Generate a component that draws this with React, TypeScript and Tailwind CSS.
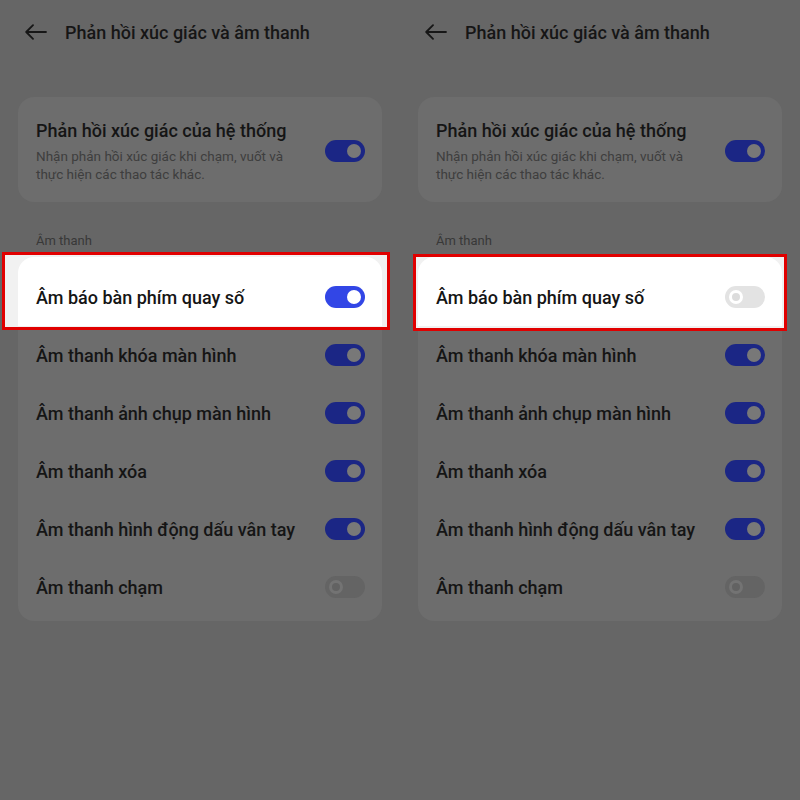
import React from 'react';

type Row = { label: string; on: boolean };

const rows: Row[] = [
  { label: 'Âm thanh khóa màn hình', on: true },
  { label: 'Âm thanh ảnh chụp màn hình', on: true },
  { label: 'Âm thanh xóa', on: true },
  { label: 'Âm thanh hình động dấu vân tay', on: true },
  { label: 'Âm thanh chạm', on: false },
];

function Toggle({ on, lit }: { on: boolean; lit?: boolean }) {
  if (on) {
    return (
      <div
        className={`flex h-[22px] w-[40px] shrink-0 items-center justify-end rounded-full pr-[4px] ${
          lit ? 'bg-[#3246e6]' : 'bg-[#1b2685]'
        }`}
      >
        <div className={`h-[14px] w-[14px] rounded-full ${lit ? 'bg-white' : 'bg-[#787878]'}`} />
      </div>
    );
  }
  return (
    <div
      className={`flex h-[22px] w-[40px] shrink-0 items-center rounded-full pl-[4px] ${
        lit ? 'bg-[#e3e3e3]' : 'bg-[#646464]'
      }`}
    >
      <div
        className={`h-[14px] w-[14px] rounded-full border-[3px] ${
          lit ? 'border-white bg-[#dcdcdc]' : 'border-[#737373] bg-[#626262]'
        }`}
      />
    </div>
  );
}

function ListRow({ row, lit }: { row: Row; lit?: boolean }) {
  return (
    <div className="flex h-[58px] items-center justify-between pl-[18px] pr-[17px]">
      <span className="text-[18px] font-medium text-[#151515]">{row.label}</span>
      <Toggle on={row.on} lit={lit} />
    </div>
  );
}

function Panel({ dialOn, left }: { dialOn: boolean; left: boolean }) {
  return (
    <div className="flex w-[400px] flex-col px-[18px]">
      {/* header */}
      <div className="flex h-[64px] items-center">
        <svg width="22" height="16" viewBox="0 0 22 16" className="ml-[7px] shrink-0" fill="none" stroke="#161616" strokeWidth="1.8" strokeLinecap="round" strokeLinejoin="round">
          <path d="M21 8H1.5M8 1.2L1.2 8 8 14.8" />
        </svg>
        <span className="ml-[18px] text-[18px] font-medium text-[#161616]">Phản hồi xúc giác và âm thanh</span>
      </div>

      {/* system haptics card */}
      <div className="mt-[33px] flex items-center justify-between rounded-[16px] bg-[#6d6d6d] pb-[19px] pl-[18px] pr-[17px] pt-[22px]">
        <div className="flex flex-col">
          <span className="text-[18px] font-medium leading-[24px] text-[#151515]">Phản hồi xúc giác của hệ thống</span>
          <span className="mt-[4px] text-[13.5px] leading-[18px] text-[#3e3e3e]">
            Nhận phản hồi xúc giác khi chạm, vuốt và
            <br />
            thực hiện các thao tác khác.
          </span>
        </div>
        <Toggle on />
      </div>

      <div className="mt-[30px] pl-[18px] text-[13px] leading-[18px] text-[#383838]">Âm thanh</div>

      {/* highlighted first row */}
      <div
        className={`relative z-10 border-[3px] border-[#e00000] bg-[#f1f1f1] ${
          left ? '-ml-[16px] -mr-[8px] mt-[2px] pb-[1px] pl-[13px] pr-[5px] pt-[2px]' : '-mx-[5px] mt-[4px] pb-[2px] px-[2px] pt-0'
        }`}
      >
        <div className="rounded-t-[16px] bg-white pt-[11px]">
          <ListRow row={{ label: 'Âm báo bàn phím quay số', on: dialOn }} lit />
        </div>
      </div>

      <div className={`rounded-b-[16px] bg-[#6d6d6d] pb-[5px] ${left ? '-mt-[4px]' : '-mt-[5px]'}`}>
        {rows.map((r) => (
          <ListRow key={r.label} row={r} />
        ))}
      </div>
    </div>
  );
}

export default function App() {
  return (
    <div className="flex h-[800px] w-[800px] bg-[#666666]" style={{ fontFamily: 'Roboto, "Noto Sans", sans-serif' }}>
      <Panel dialOn left />
      <Panel dialOn={false} left={false} />
    </div>
  );
}
